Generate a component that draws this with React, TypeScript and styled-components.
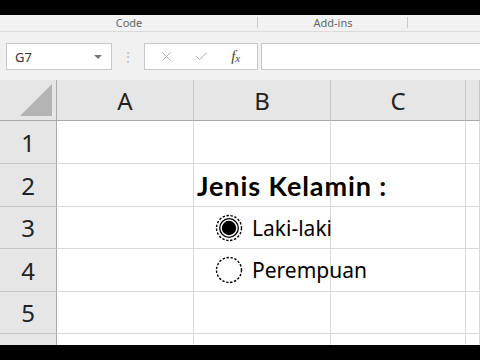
import styled, { createGlobalStyle } from 'styled-components';
import { X, Check } from 'lucide-react';

const GlobalStyle = createGlobalStyle`
  html, body { margin: 0; padding: 0; background: #000; }
  body { font-family: "Noto Sans", "Open Sans", sans-serif; }
`;

const columnLabels = ['A', 'B', 'C', ''];
const rowHeights = [43, 43, 42, 43, 42, 11];

interface RadioProps {
  checked?: boolean;
}

function RadioGlyph({ checked }: RadioProps) {
  return (
    <svg width="28" height="28" viewBox="0 0 28 28">
      <circle cx="14" cy="14" r="12.5" fill="#fff" stroke="#000" strokeWidth="1.4" strokeDasharray="2.4 1.6" />
      {checked && (
        <>
          <circle cx="14" cy="14" r="9.3" fill="none" stroke="#000" strokeWidth="1.3" />
          <circle cx="14" cy="14" r="7.2" fill="#000" />
        </>
      )}
    </svg>
  );
}

function OptionButton({ label, checked }: { label: string; checked?: boolean }) {
  return (
    <Option>
      <RadioGlyph checked={checked} />
      <OptionLabel>{label}</OptionLabel>
    </Option>
  );
}

export default function App() {
  const cellContent = (row: number, col: number) => {
    if (col !== 1) return null;
    if (row === 2) return <Title>Jenis Kelamin :</Title>;
    if (row === 3) return <OptionButton label="Laki-laki" checked />;
    if (row === 4) return <OptionButton label="Perempuan" />;
    return null;
  };

  return (
    <Screen>
      <GlobalStyle />
      <TopBand />
      <GroupBar>
        <Group $width={258}>Code</Group>
        <Group $width={150}>Add-ins</Group>
        <GroupFill />
      </GroupBar>
      <FormulaBar>
        <NameBox>
          <span>G7</span>
          <Caret />
        </NameBox>
        <Grip>⋮</Grip>
        <FormulaButtons>
          <FxButton><X size={15} strokeWidth={1.4} color="#a8a8a8" /></FxButton>
          <FxButton><Check size={15} strokeWidth={1.6} color="#a8a8a8" /></FxButton>
          <FxButton><FxText>f<sub>x</sub></FxText></FxButton>
        </FormulaButtons>
        <FormulaInput />
      </FormulaBar>
      <Sheet>
        <Corner>
          <svg width="32" height="32" viewBox="0 0 32 32">
            <polygon points="0,32 32,32 32,0" fill="#b4b4b4" />
          </svg>
        </Corner>
        {columnLabels.map((c, i) => (
          <ColHeader key={i}>{c}</ColHeader>
        ))}
        {rowHeights.map((_, r) => (
          <Row key={r}>
            <RowHeader $partial={r === 5}>{r < 5 ? r + 1 : ''}</RowHeader>
            {columnLabels.map((_, c) => (
              <Cell key={c} $partial={r === 5}>{cellContent(r + 1, c)}</Cell>
            ))}
          </Row>
        ))}
      </Sheet>
      <BottomBand />
    </Screen>
  );
}

const Screen = styled.div`
  width: 480px;
  height: 360px;
  display: flex;
  flex-direction: column;
  background: #000;
  overflow: hidden;
`;

const TopBand = styled.div`
  height: 15px;
  flex-shrink: 0;
`;

const BottomBand = styled.div`
  flex: 1;
`;

const GroupBar = styled.div`
  width: 480px;
  height: 16px;
  flex-shrink: 0;
  display: flex;
  background: #f2f2f2;
  border-bottom: 1px solid #dadada;
`;

const Group = styled.div<{ $width: number }>`
  position: relative;
  flex-shrink: 0;
  width: ${({ $width }) => $width}px;
  text-align: center;
  font-size: 11px;
  line-height: 16px;
  color: #666;

  &::after {
    content: '';
    position: absolute;
    right: 0;
    top: 2px;
    height: 11px;
    border-right: 1px solid #c9c9c9;
  }
`;

const GroupFill = styled.div`
  flex: 1;
  background: #f2f2f2;
`;

const FormulaBar = styled.div`
  height: 48px;
  flex-shrink: 0;
  box-sizing: border-box;
  display: flex;
  align-items: flex-start;
  padding: 11px 0 0 6px;
  background: #f1f1f1;
`;

const NameBox = styled.div`
  width: 106px;
  height: 27px;
  box-sizing: border-box;
  display: flex;
  align-items: center;
  justify-content: space-between;
  padding: 0 9px 0 8px;
  background: #fff;
  border: 1px solid #c8c8c8;
  font-size: 13px;
  color: #333;
`;

const Caret = styled.span`
  width: 0;
  height: 0;
  border-left: 4px solid transparent;
  border-right: 4px solid transparent;
  border-top: 4px solid #777;
`;

const Grip = styled.div`
  width: 32px;
  height: 27px;
  text-align: center;
  line-height: 27px;
  font-size: 14px;
  color: #bdbdbd;
`;

const FormulaButtons = styled.div`
  width: 114px;
  height: 27px;
  box-sizing: border-box;
  display: flex;
  align-items: center;
  padding: 0 4px;
  background: #fff;
  border: 1px solid #c8c8c8;
`;

const FxButton = styled.div`
  flex: 1;
  display: flex;
  justify-content: center;
  align-items: center;
`;

const FxText = styled.span`
  font-family: "Liberation Serif", serif;
  font-style: italic;
  font-size: 15px;
  color: #444;

  sub {
    font-size: 11px;
    vertical-align: -1px;
  }
`;

const FormulaInput = styled.div`
  flex: 1;
  height: 27px;
  margin-left: 3px;
  box-sizing: border-box;
  background: #fff;
  border: 1px solid #c8c8c8;
  border-right: none;
`;

const Sheet = styled.div`
  flex-shrink: 0;
  display: grid;
  grid-template-columns: 57px 137px 137px 135px 1fr;
  grid-template-rows: 41px ${rowHeights.map((h) => `${h}px`).join(' ')};
  background: #fff;
`;

const Row = styled.div`
  display: contents;
`;

const Corner = styled.div`
  box-sizing: border-box;
  display: flex;
  align-items: flex-end;
  justify-content: flex-end;
  padding: 0 4px 4px 0;
  background: #e6e6e6;
  border-right: 1px solid #a9a9a9;
  border-bottom: 1px solid #a9a9a9;
`;

const ColHeader = styled.div`
  box-sizing: border-box;
  display: flex;
  align-items: center;
  justify-content: center;
  background: #e6e6e6;
  border-right: 1px solid #c6c6c6;
  border-bottom: 1px solid #a9a9a9;
  font-size: 24px;
  color: #222;
`;

const RowHeader = styled.div<{ $partial?: boolean }>`
  box-sizing: border-box;
  display: flex;
  align-items: center;
  justify-content: center;
  background: #e6e6e6;
  border-right: 1px solid #a9a9a9;
  border-bottom: ${({ $partial }) => ($partial ? 'none' : '1px solid #c6c6c6')};
  font-size: 24px;
  color: #222;
`;

const Cell = styled.div<{ $partial?: boolean }>`
  box-sizing: border-box;
  display: flex;
  align-items: flex-end;
  min-width: 0;
  border-right: 1px solid #d9d9d9;
  border-bottom: ${({ $partial }) => ($partial ? 'none' : '1px solid #d9d9d9')};
  white-space: nowrap;
`;

const Title = styled.span`
  padding: 0 0 4px 3px;
  font-family: Lato, "Liberation Sans", sans-serif;
  font-weight: 700;
  font-size: 27px;
  letter-spacing: 0.9px;
  color: #000;
`;

const Option = styled.div`
  display: flex;
  align-items: center;
  gap: 9px;
  height: 100%;
  padding-left: 21px;
`;

const OptionLabel = styled.span`
  font-size: 21px;
  color: #000;
`;
